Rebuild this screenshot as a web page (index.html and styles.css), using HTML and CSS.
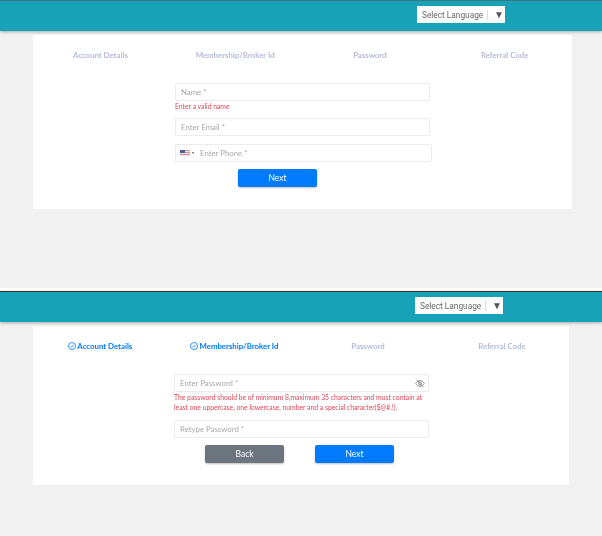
FILE: index.html
```html
<!DOCTYPE html>
<html lang="en">

<head>
    <meta charset="UTF-8">
    <meta name="viewport" content="width=device-width, initial-scale=1.0">
    <title>Sign Up</title>
    <link rel="stylesheet" href="styles.css">
</head>

<body>
    <section class="screen screen-one">
        <header class="topbar">
            <div class="language">
                <span class="language-label">Select Language</span>
                <span class="language-arrow">▼</span>
            </div>
        </header>
        <div class="card">
            <div class="steps">
                <div class="step">Account Details</div>
                <div class="step">Membership/Broker Id</div>
                <div class="step">Password</div>
                <div class="step">Referral Code</div>
            </div>
            <form class="form">
                <input class="field" type="text" placeholder="Name *">
                <p class="error">Enter a valid name</p>
                <input class="field" type="text" placeholder="Enter Email *">
                <div class="field phone">
                    <svg class="flag" viewBox="0 0 10 6" width="10" height="6">
                        <rect width="10" height="6" fill="#e08f98"/>
                        <rect y="1" width="10" height="1" fill="#e6e3ea"/>
                        <rect y="3" width="10" height="1" fill="#e6e3ea"/>
                        <rect y="5" width="10" height="1" fill="#e6e3ea"/>
                        <rect width="5" height="3" fill="#4f5b91"/>
                    </svg>
                    <span class="flag-caret"></span>
                    <input class="inner-input" type="text" placeholder="Enter Phone *">
                </div>
                <div class="actions actions-single">
                    <button class="btn btn-next" type="button">Next</button>
                </div>
            </form>
        </div>
    </section>

    <section class="screen screen-two">
        <header class="topbar">
            <div class="language">
                <span class="language-label">Select Language</span>
                <span class="language-arrow">▼</span>
            </div>
        </header>
        <div class="card">
            <div class="steps">
                <div class="step done">
                    <svg class="check" viewBox="0 0 16 16" width="8" height="8">
                        <circle cx="8" cy="8" r="7" fill="none" stroke="#007bff" stroke-width="1.6"/>
                        <path d="M4.8 8.2l2.2 2.2 4.2-4.6" fill="none" stroke="#007bff" stroke-width="1.6"/>
                    </svg>
                    Account Details
                </div>
                <div class="step done">
                    <svg class="check" viewBox="0 0 16 16" width="8" height="8">
                        <circle cx="8" cy="8" r="7" fill="none" stroke="#007bff" stroke-width="1.6"/>
                        <path d="M4.8 8.2l2.2 2.2 4.2-4.6" fill="none" stroke="#007bff" stroke-width="1.6"/>
                    </svg>
                    Membership/Broker Id
                </div>
                <div class="step">Password</div>
                <div class="step">Referral Code</div>
            </div>
            <form class="form">
                <div class="field password">
                    <input class="inner-input" type="password" placeholder="Enter Password *">
                    <svg class="eye" viewBox="0 0 16 14" width="10" height="9">
                        <path d="M1 7c2-3 4.300-4.500 7-4.500S13 4 15 7c-2 3-4.300 4.500-7 4.500S3 10 1 7z" fill="none" stroke="#888" stroke-width="1.500"/>
                        <circle cx="8" cy="7" r="2.400" fill="none" stroke="#888" stroke-width="1.500"/>
                        <path d="M3 1l10.500 12" stroke="#888" stroke-width="1.500"/>
                    </svg>
                </div>
                <p class="error error-long">The password should be of minimum 8,maximum 35 characters and must contain at least one uppercase, one lowercase, number and a special character($@#.!).</p>
                <input class="field" type="password" placeholder="Retype Password *">
                <div class="actions">
                    <button class="btn btn-back" type="button">Back</button>
                    <button class="btn btn-next" type="button">Next</button>
                </div>
            </form>
        </div>
    </section>
</body>

</html>
```
FILE: styles.css
```css
body {
    font-family: Lato, "Open Sans", sans-serif;
    background: #f1f1f1;
    margin: 0;
    width: 602px;
    height: 536px;
    overflow: hidden;
}

.screen {
    filter: blur(0.4px);
}

.screen-one {
    height: 288px;
}

.screen-two {
    border-top: 3px solid #fff;
}

.topbar {
    height: 30px;
    background: #17a2b8;
    border-top: 1px solid #3f7683;
    box-shadow: 0 1px 3px rgba(0, 0, 0, 0.3);
    display: flex;
    justify-content: flex-end;
    align-items: center;
    padding-right: 97px;
}

.screen-two .topbar {
    border-top-color: #333;
    padding-right: 99px;
}

.language {
    width: 88px;
    height: 17px;
    box-sizing: border-box;
    background: #fff;
    display: flex;
    align-items: center;
    padding-left: 5px;
    font-family: Roboto, sans-serif;
    font-size: 8.300px;
    color: #666;
    white-space: nowrap;
    margin-top: -3px;
}

.language-label {
    width: 60px;
    padding-right: 5px;
    border-right: 1px solid #ddd;
    line-height: 10px;
}

.language-arrow {
    margin-left: 6px;
    font-size: 10px;
    color: #555;
}

.card {
    background: #fff;
    margin: 4px 30px 0 33px;
    height: 174px;
    box-sizing: border-box;
    padding-top: 16px;
}

.screen-two .card {
    margin-right: 33px;
    height: 159px;
}

.steps {
    display: grid;
    grid-template-columns: repeat(4, 1fr);
    height: 32px;
}

.step {
    text-align: center;
    font-size: 7.800px;
    font-weight: 700;
    color: #b3bcd9;
    line-height: 9px;
}

.step.done {
    color: #007bff;
}

.check {
    vertical-align: -1px;
}

.form {
    width: 255px;
    margin-left: 142px;
}

.screen-two .form {
    margin-left: 141px;
}

.field {
    display: block;
    width: 100%;
    height: 18px;
    box-sizing: border-box;
    background: #fff;
    border: 1px solid #ececec;
    border-radius: 2px;
    padding: 0 5px;
    font-family: inherit;
    font-size: 7.800px;
    outline: none;
}

.field::placeholder,
.inner-input::placeholder {
    color: #a8a8a8;
}

.error {
    margin: 0 0 7px;
    font-size: 6.800px;
    line-height: 10px;
    color: #e0485a;
}

.error-long {
    margin-bottom: 8px;
}

.phone {
    width: 257px;
    margin-top: 8px;
    display: flex;
    align-items: center;
    padding: 0 0 0 4px;
}

.flag {
    flex: none;
}

.flag-caret {
    flex: none;
    margin-left: 2px;
    border-top: 2px solid #555;
    border-left: 1.500px solid transparent;
    border-right: 1.500px solid transparent;
}

.inner-input {
    flex: 1;
    min-width: 0;
    border: 0;
    outline: none;
    padding: 0 0 0 6px;
    font-family: inherit;
    font-size: 7.800px;
    background: transparent;
}

.password {
    display: flex;
    align-items: center;
    padding: 0 3px 0 5px;
}

.password .inner-input {
    padding-left: 0;
}

.eye {
    flex: none;
}

.actions {
    display: flex;
    gap: 31px;
    margin-top: 7px;
    padding-left: 31px;
}

.actions-single {
    padding-left: 63px;
}

.btn {
    width: 79px;
    height: 18px;
    border: 0;
    border-radius: 2px;
    box-shadow: 0 1px 2px rgba(0, 0, 0, 0.25);
    font-family: inherit;
    font-size: 8.500px;
    color: #fff;
    padding: 0;
}

.btn-next {
    background: #007bff;
}

.btn-back {
    background: #6c757d;
}
```
